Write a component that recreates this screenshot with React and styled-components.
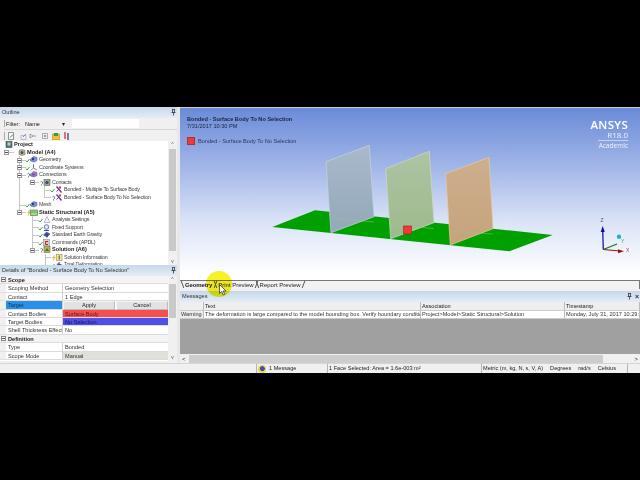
import React from 'react';
import styled, { createGlobalStyle } from 'styled-components';

const Global = createGlobalStyle`
  html, body { margin: 0; padding: 0; background: #000; }
  body { font-family: "Liberation Sans", Arial, sans-serif; }
  * { box-sizing: border-box; }
`;

const Screen = styled.div`
  width: 640px;
  height: 480px;
  background: #000;
  padding-top: 107px;
  position: relative;
  overflow: hidden;
  filter: blur(0.35px);
`;

const Win = styled.div`
  height: 266px;
  background: #f0f0f0;
  display: flex;
  flex-direction: column;
  font-size: 5.6px;
  color: #222;
`;

const Main = styled.div`
  height: 256px;
  display: flex;
`;

const Left = styled.div`
  width: 180px;
  flex: none;
  display: flex;
  flex-direction: column;
  border-right: 3px solid #e8e8e8;
`;

const Right = styled.div`
  flex: 1;
  min-width: 0;
  display: flex;
  flex-direction: column;
`;

const PanelHead = styled.div`
  height: 11px;
  flex: none;
  background: linear-gradient(#c6d8ea, #e3edf6);
  display: flex;
  align-items: center;
  justify-content: space-between;
  padding: 0 1px 1px 2px;
  color: #333;
`;

const Pins = styled.span`
  display: flex;
  align-items: center;
  gap: 3px;
  font-size: 7px;
  line-height: 7px;
  font-weight: 700;
`;

const FilterRow = styled.div`
  height: 12px;
  flex: none;
  display: flex;
  align-items: center;
  margin-left: 4px;
  padding-left: 2px;
  border-bottom: 1px solid #d8d8d8;
  position: relative;
  &::before {
    content: '';
    position: absolute;
    left: 0;
    top: 2px;
    bottom: 2px;
    width: 1px;
    background: #aaa;
  }
`;

const FilterName = styled.div`
  width: 47px;
  margin-left: 5px;
  display: flex;
  justify-content: space-between;
  padding-right: 7px;
`;

const FilterInput = styled.div`
  width: 67px;
  height: 9px;
  background: #fff;
`;

const Tools = styled.div`
  height: 11px;
  flex: none;
  display: flex;
  align-items: center;
  padding-left: 4px;
`;

const ToolSep = styled.i`
  width: 1px;
  height: 8px;
  background: #aaa;
  margin-right: 2px;
`;

const TreeWrap = styled.div`
  height: 124px;
  flex: none;
  display: flex;
  background: #fff;
  overflow: hidden;
`;

const Tree = styled.div`
  flex: 1;
  min-width: 0;
`;

const TreeRow = styled.div`
  height: 7.5px;
  position: relative;
  padding-left: ${p => p.$x}px;
  line-height: 7.5px;
  white-space: nowrap;
  font-weight: ${p => (p.$bold ? 700 : 400)};
  letter-spacing: ${p => (p.$bold ? 0 : -0.22)}px;
  font-size: ${p => (p.$bold ? 5.6 : 5.4)}px;
  color: ${p => (p.$bold ? '#222' : '#444')};
  display: flex;
  align-items: center;
`;

const VLine = styled.i`
  position: absolute;
  left: ${p => p.$x}px;
  top: 0;
  bottom: ${p => (p.$half ? 3.5 : 0)}px;
  width: 1px;
  background: #c6c6c6;
`;

const HLine = styled.i`
  position: absolute;
  left: ${p => p.$x}px;
  top: 3.5px;
  width: ${p => p.$w}px;
  height: 1px;
  background: #c6c6c6;
`;

const Expander = styled.i`
  position: absolute;
  left: ${p => p.$x - 2}px;
  top: 1.5px;
  width: 5px;
  height: 5px;
  border: 1px solid #999;
  background: linear-gradient(#555, #555) center / 3px 1px no-repeat #fff;
`;

const Scroll = styled.div`
  width: 9px;
  flex: none;
  background: #f0f0f0;
  display: flex;
  flex-direction: column;
  align-items: center;
  color: #555;
  font-size: 5px;
  line-height: 7px;
`;

const Thumb = styled.div`
  width: 7px;
  height: ${p => p.$h}px;
  margin-top: 1px;
  background: #c9c9c9;
`;

const Grow = styled.div`
  flex: 1;
`;

const DetailsWrap = styled.div`
  height: 85px;
  flex: none;
  display: flex;
  background: #fff;
`;

const DetailTable = styled.div`
  flex: 1;
  display: grid;
  grid-template-columns: 6px 57px 1fr;
  grid-auto-rows: 8.4px;
`;

const Gutter = styled.div`
  background: #f0f0f0;
  border-bottom: 1px solid #e0e0e0;
  display: flex;
  align-items: center;
  justify-content: center;
`;

const Minus = styled.i`
  width: 5px;
  height: 5px;
  border: 1px solid #888;
  background: linear-gradient(#555, #555) center / 3px 1px no-repeat #fff;
`;

const Section = styled.div`
  grid-column: 2 / 4;
  font-weight: 700;
  line-height: 8px;
  padding-left: 2px;
  background: #f4f4f4;
  border-bottom: 1px solid #dcdcdc;
`;

const Label = styled.div`
  line-height: 8px;
  padding-left: 2px;
  border-right: 1px solid #cfcfcf;
  border-bottom: 1px solid #dcdcdc;
  white-space: nowrap;
  overflow: hidden;
  color: ${p => (p.$active ? '#16324f' : '#333')};
  background: ${p => (p.$active ? '#2a8fe8' : '#fff')};
`;

const Value = styled.div`
  line-height: 8px;
  padding-left: 2px;
  border-bottom: 1px solid #dcdcdc;
  background: ${p => p.$bg || '#fff'};
  color: ${p => p.$color || '#333'};
`;

const ApplyCell = styled.div`
  display: grid;
  grid-template-columns: 1fr 1fr;
  gap: 1px;
  background: #fff;
  border-bottom: 1px solid #dcdcdc;
`;

const ApplyBtn = styled.div`
  background: #e2e2e2;
  border: 1px solid #bbb;
  border-top-color: #f4f4f4;
  border-left-color: #f4f4f4;
  text-align: center;
  line-height: 6.4px;
`;

const Viewport = styled.div`
  height: 173px;
  flex: none;
  position: relative;
  background: linear-gradient(#6a8bd8 0%, #a3b7e8 35%, #d9e2f6 65%, #ffffff 97%);
  border-top: 1px solid #ccc;
  padding: 7px 0 0 7px;
  color: #1c2440;
  overflow: hidden;
`;

const Model = styled.svg`
  position: absolute;
  left: 0;
  top: 0;
`;

const ViewTitle = styled.div`
  font-weight: 700;
  line-height: 8px;
  position: relative;
`;

const ViewDate = styled.div`
  line-height: 7px;
  position: relative;
`;

const Legend = styled.div`
  display: flex;
  align-items: center;
  gap: 3px;
  margin-top: 7px;
  position: relative;
  color: #2c3560;
`;

const Swatch = styled.i`
  width: 8px;
  height: 8px;
  background: #f03a3a;
  border: 1px solid #a33;
`;

const Logo = styled.div`
  position: absolute;
  right: 12px;
  top: 10px;
  width: 40px;
  text-align: right;
  color: #fff;
  font-family: "Open Sans", sans-serif;
`;

const LogoName = styled.div`
  font-size: 11.5px;
  line-height: 13px;
  font-weight: 600;
  letter-spacing: 0.3px;
`;

const LogoVersion = styled.div`
  font-size: 8px;
  line-height: 8px;
  margin-left: 10px;
  padding-bottom: 1px;
  border-bottom: 1px solid #c6d2f0;
  color: #eef2fc;
`;

const LogoKind = styled.div`
  font-size: 6.5px;
  line-height: 9px;
  color: #eef2fc;
`;

const TabBar = styled.div`
  height: 9px;
  flex: none;
  display: flex;
  background: #f2f2f2;
  border-top: 1px solid #777;
  border-right: 1px solid #777;
  padding-left: 4px;
  gap: 4px;
  margin-bottom: 2px;
`;

const Tab = styled.div`
  font-size: 6px;
  line-height: 8px;
  padding: 0 1px;
  color: #222;
  font-weight: ${p => (p.$on ? 700 : 400)};
  letter-spacing: ${p => (p.$on ? -0.1 : 0)}px;
  position: relative;
  &::before, &::after {
    content: '';
    position: absolute;
    top: 0;
    bottom: 1px;
    width: 0.6px;
    background: #555;
  }
  &::before {
    left: -2px;
    transform: skewX(20deg);
  }
  &::after {
    right: -2px;
    transform: skewX(-20deg);
  }
`;

const TableHead = styled.div`
  height: 9px;
  flex: none;
  display: grid;
  grid-template-columns: 24px 217px 144px 1fr;
  background: #eeeeee;
`;

const TableRow = styled(TableHead)`
  background: #fff;
  height: 8px;
  color: #333;
`;

const HeadCell = styled.div`
  padding-left: 1px;
  line-height: 9px;
  border-right: 1px solid #bbb;
  border-bottom: 1px solid #ccc;
  white-space: nowrap;
  overflow: hidden;
`;

const Cell = styled(HeadCell)`
  line-height: 7px;
  background: ${p => (p.$gray ? '#ececec' : '#fff')};
`;

const GrayArea = styled.div`
  flex: 1;
  background: #a0a0a0;
`;

const HScroll = styled.div`
  height: 9px;
  flex: none;
  background: #f0f0f0;
  display: flex;
  align-items: center;
  justify-content: space-between;
  padding: 0 2px;
  font-size: 6px;
`;

const HThumb = styled.div`
  flex: 1;
  height: 8px;
  margin: 0 31px 0 3px;
  background: #cdcdcd;
`;

const Status = styled.div`
  height: 10px;
  flex: none;
  display: grid;
  grid-template-columns: 256px 71px 154px 146px 1fr;
  background: #f0f0f0;
  line-height: 9px;
`;

const StatusCell = styled.div`
  border-left: 1px solid ${p => (p.$line ? '#b5b5b5' : 'transparent')};
  border-top: 1px solid #d5d5d5;
  padding-left: 1px;
  display: flex;
  gap: 7px;
  align-items: center;
  white-space: nowrap;
  overflow: hidden;
`;

const MsgIcon = styled.i`
  width: 8px;
  height: 8px;
  margin-right: -4px;
  border-radius: 50%;
  background: radial-gradient(circle at 55% 45%, #3350c8 0 35%, #f0d040 40%);
`;

const Spot = styled.div`
  position: absolute;
  left: 206px;
  top: 271px;
  width: 26px;
  height: 26px;
  border-radius: 50%;
  background: #f8f224;
  mix-blend-mode: multiply;
`;

const Cursor = styled.svg`
  position: absolute;
  left: 219px;
  top: 284px;
`;

const ToolBtn = styled.svg`
  flex: none;
  margin-right: ${p => p.$gap}px;
`;

const toolIcons = [
  { gap: 5, body: <><path d="M1.5.5h5v7h-5z" fill="#fff" stroke="#667" strokeWidth=".7" /><path d="M3 5.5l3-3" stroke="#2a8a2a" /></> },
  { gap: 1, body: <><path d="M1 3.5h5v4H1z" fill="#eef" stroke="#99a" strokeWidth=".6" /><path d="M3 5l3-3" stroke="#5a7ad0" strokeWidth=".8" /></> },
  { gap: 4, body: <><path d="M1 2l3 2-3 2zM4 4h3" fill="#fff" stroke="#778" strokeWidth=".7" /></> },
  { gap: 3, body: <><path d="M1.5 1.5h5v5h-5z" fill="#fff" stroke="#889" strokeWidth=".7" /><path d="M2.5 4h3M4 2.5v3" stroke="#445" strokeWidth=".6" /></> },
  { gap: 3, body: <><path d="M0 2h8v6H0z" fill="#e8c040" stroke="#8a7a20" strokeWidth=".5" /><path d="M2 1h4v3H2z" fill="#3a9a3a" /></> },
  { gap: 0, body: <><path d="M2 0v7" stroke="#d02020" strokeWidth="1.2" /><path d="M5 1v7" stroke="#2a2a90" strokeWidth="1.2" /></> },
];

const glyphs = {
  project: <><rect x="6" y=".5" width="6" height="6" fill="#3c7a9a" stroke="#234" strokeWidth=".5" /><rect x="7.5" y="1.5" width="3" height="3" fill="#e5cd60" /></>,
  model: <><path d="M6 1.5L9 .5l3 1v4l-3 1-3-1z" fill="#c9c060" stroke="#456" strokeWidth=".5" /><circle cx="9" cy="3.5" r="1.5" fill="#3a4ab0" /></>,
  geom: <><path d="M5.5 3l3-2.500 3.500 1v3l-3 1.500-3.500-1z" fill="#7f95d6" stroke="#3a4a90" strokeWidth=".5" /><circle cx="8" cy="3" r="1.2" fill="#2a3a8a" /></>,
  coord: <><path d="M8.5 4V.5" stroke="#2a2ac0" strokeWidth=".7" /><path d="M8.5 4L12 6" stroke="#c02020" strokeWidth=".7" /><path d="M8.5 4L5.5 6.5" stroke="#2a9a2a" strokeWidth=".7" /></>,
  conn: <><path d="M5.5 3l3-2.500 3.500 1v3l-3 1.500-3.500-1z" fill="#8a8fd0" stroke="#3a3a80" strokeWidth=".5" /><path d="M7 2.5h3v2H7z" fill="#a23ab0" /></>,
  contacts: <><rect x="6" y=".5" width="6" height="6" fill="#a5b466" stroke="#445" strokeWidth=".5" /><circle cx="9" cy="3.5" r="1.7" fill="#3a4aa8" /></>,
  bond: <><path d="M6.5.5l5 6" stroke="#6a2ab0" strokeWidth="1.3" /><path d="M6.5 5.5l2-2" stroke="#222" strokeWidth=".8" /><rect x="9" y=".5" width="2" height="2" fill="#d03030" /></>,
  static: <><rect x="5.5" y="1" width="7" height="5.5" fill="#a9d48c" stroke="#2a7a2a" strokeWidth=".6" /><path d="M6 3h6" stroke="#2a7a2a" strokeWidth=".5" /></>,
  analysis: <><path d="M6 6.5L9 .5l3 6z" fill="#eef" stroke="#889" strokeWidth=".5" /></>,
  fixed: <><circle cx="8.5" cy="3" r="2.3" fill="#dfe4f5" stroke="#3a4aa0" strokeWidth=".7" /><path d="M6 6.5h5" stroke="#3a4aa0" /></>,
  gravity: <><path d="M5.5 4l3-3 3.500 2-3 3z" fill="#3f58b0" stroke="#223" strokeWidth=".4" /><path d="M9 3v3.5" stroke="#223" strokeWidth=".7" /></>,
  commands: <><rect x="5.5" y=".5" width="6" height="6.5" fill="#cfcfcf" stroke="#667" strokeWidth=".4" /><path d="M10 2.5H7.5v3H10" fill="none" stroke="#e01010" strokeWidth="1" /></>,
  solution: <><rect x="6" y=".5" width="6" height="6" fill="#c3b54a" stroke="#445" strokeWidth=".5" /><path d="M7 5l2-3 2 3z" fill="#2a7a3a" /></>,
  info: <><rect x="6.5" y=".5" width="5.5" height="6" fill="#f5ec70" stroke="#776" strokeWidth=".5" /><path d="M9.2 1.5v4" stroke="#2a2ac0" strokeWidth=".9" /></>,
  deform: <><path d="M5.5 5l3-3 4 2-3 2.500z" fill="#3050c0" /><path d="M7 3l2-2 1.500 1" fill="#e03a20" /></>,
};

const TreeIcon = ({ kind, st }) => (
  <svg width="13" height="7" viewBox="0 0 13 7" style={{ marginRight: 1, flex: 'none' }}>
    {st === 'ok' && <path d="M.8 4.5l1.300 1.500L4.500 3" fill="none" stroke="#1c9a1c" strokeWidth=".9" />}
    {st === 'q' && <path d="M2.500 3q1.300-1.300 2 0T3.500 5.500v1" fill="none" stroke="#444" strokeWidth=".7" />}
    {st === 'bolt' && <path d="M4.500 1L2.500 4H4L3 6.800 5.500 3H4z" fill="#e8c520" stroke="#a09020" strokeWidth=".2" />}
    {glyphs[kind]}
  </svg>
);

const treeData = [
  { x: 0, text: 'Project', bold: true, kind: 'project' },
  { x: 13, text: 'Model (A4)', bold: true, kind: 'model', exp: 6, h: [[6, 8]] },
  { x: 25, text: 'Geometry', kind: 'geom', st: 'ok', exp: 19, lines: [[19]], h: [[19, 7]] },
  { x: 25, text: 'Coordinate Systems', kind: 'coord', st: 'ok', exp: 19, lines: [[19]], h: [[19, 7]] },
  { x: 25, text: 'Connections', kind: 'conn', st: 'q', exp: 19, lines: [[19]], h: [[19, 7]] },
  { x: 38, text: 'Contacts', kind: 'contacts', st: 'q', exp: 32, lines: [[19]], h: [[32, 7]] },
  { x: 50, text: 'Bonded - Multiple To Surface Body', kind: 'bond', st: 'ok', lines: [[19], [44]], h: [[44, 7]] },
  { x: 50, text: 'Bonded - Surface Body To No Selection', kind: 'bond', st: 'q', lines: [[19], [44, 1]], h: [[44, 7]] },
  { x: 25, text: 'Mesh', kind: 'geom', st: 'ok', lines: [[19]], h: [[19, 7]] },
  { x: 25, text: 'Static Structural (A5)', bold: true, kind: 'static', st: 'bolt', exp: 19, lines: [[19, 1]], h: [[19, 7]] },
  { x: 38, text: 'Analysis Settings', kind: 'analysis', st: 'ok', lines: [[32]], h: [[32, 7]] },
  { x: 38, text: 'Fixed Support', kind: 'fixed', st: 'ok', lines: [[32]], h: [[32, 7]] },
  { x: 38, text: 'Standard Earth Gravity', kind: 'gravity', st: 'ok', lines: [[32]], h: [[32, 7]] },
  { x: 38, text: 'Commands (APDL)', kind: 'commands', st: 'ok', lines: [[32]], h: [[32, 7]] },
  { x: 38, text: 'Solution (A6)', bold: true, kind: 'solution', st: 'q', exp: 32, lines: [[32, 1]], h: [[32, 7]] },
  { x: 50, text: 'Solution Information', kind: 'info', st: 'bolt', lines: [[45]], h: [[45, 6]] },
  { x: 50, text: 'Total Deformation', kind: 'deform', st: 'ok', lines: [[45]], h: [[45, 6]] },
];

const details = [
  { section: 'Scope' },
  { label: 'Scoping Method', value: 'Geometry Selection' },
  { label: 'Contact', value: '1 Edge' },
  { label: 'Target', active: true, apply: true },
  { label: 'Contact Bodies', value: 'Surface Body', bg: '#f55050', color: '#6a1010' },
  { label: 'Target Bodies', value: 'No Selection', bg: '#5050e8', color: '#14145c' },
  { label: 'Shell Thickness Effect', value: 'No' },
  { section: 'Definition' },
  { label: 'Type', value: 'Bonded' },
  { label: 'Scope Mode', value: 'Manual', bg: '#dfe0da' },
];

const toPts = pts => pts.map(([x, y]) => `${x - 180},${y - 107}`).join(' ');

const PinIcon = () => (
  <svg width="5" height="7" viewBox="0 0 5 7">
    <path d="M1 .5h3M1.5.5v3M3.5.5v3M.5 3.5h4M2.5 3.5v3" stroke="#333" strokeWidth=".8" fill="none" />
  </svg>
);

const Shade = ({ id, top, bottom }) => (
  <linearGradient id={id} x1="0" y1="0" x2="0" y2="1">
    <stop offset="0" stopColor={top} />
    <stop offset="1" stopColor={bottom} />
  </linearGradient>
);

const SceneModel = () => (
  <Model width="460" height="173" viewBox="0 0 460 173">
    <defs>
      <Shade id="p1" top="#a9b9cb" bottom="#93a8b8" />
      <Shade id="p2" top="#aec3a4" bottom="#9dba8c" />
      <Shade id="p3" top="#cdae8e" bottom="#c5a47c" />
    </defs>
    <polygon points={toPts([[272.3, 226], [315, 209.3], [493, 227.7], [552.7, 234], [509.3, 250.3]])} fill="#00a000" />
    <polygon points={toPts([[326, 160.7], [369.3, 144.3], [374, 215.7], [331, 231.7]])} fill="url(#p1)" stroke="#c5d2e0" strokeWidth="0.7" />
    <polygon points={toPts([[385.7, 167.7], [429.3, 150.3], [434, 221.7], [390.7, 237.7]])} fill="url(#p2)" stroke="#ccdcc0" strokeWidth="0.7" />
    <polygon points={toPts([[445.7, 172.7], [489, 156.3], [493, 227.7], [450.3, 244]])} fill="url(#p3)" stroke="#ecc8a0" strokeWidth="0.7" />
    <path d="M153 110.500L194 114M213 117L254 120.500M273 123.500L313 126" stroke="#8fc98f" strokeWidth=".5" fill="none" />
    <rect x="223.5" y="118" width="8" height="8" fill="#f03a3a" stroke="#a02020" strokeWidth="0.6" />
    <path d="M423.3 141.5L422.7 121" stroke="#0a0aa0" strokeWidth="1.2" />
    <path d="M422.7 118l-2 6h4z" fill="#0a0aa0" />
    <path d="M423.3 141.5L440 143" stroke="#a01010" strokeWidth="1.2" />
    <path d="M444 143.3l-6-2v4z" fill="#a01010" />
    <path d="M423.3 141.5L437 136" stroke="#0a7a1a" strokeWidth="1.2" />
    <circle cx="439" cy="128.7" r="2.2" fill="#18b8c8" />
    <text x="420.5" y="114" fontSize="5" fill="#4a4aa0">Z</text>
    <text x="446" y="144" fontSize="5" fill="#c04040">X</text>
    <text x="441" y="135" fontSize="5" fill="#4aa060">Y</text>
  </Model>
);

export default function App() {
  return (
    <>
      <Global />
      <Screen>
        <Win>
          <Main>
            <Left>
              <PanelHead>Outline<Pins><PinIcon /></Pins></PanelHead>
              <FilterRow>
                Filter:
                <FilterName>Name<span>▾</span></FilterName>
                <FilterInput />
              </FilterRow>
              <Tools>
                <ToolSep />
                {toolIcons.map((t, i) => (
                  <ToolBtn key={i} $gap={t.gap} width="8" height="8" viewBox="0 0 8 8">{t.body}</ToolBtn>
                ))}
              </Tools>
              <TreeWrap>
                <Tree>
                  {treeData.map(r => (
                    <TreeRow key={r.text} $x={r.x} $bold={r.bold}>
                      {(r.lines || []).map(([x, half], i) => <VLine key={i} $x={x} $half={half} />)}
                      {(r.h || []).map(([x, w], i) => <HLine key={i} $x={x} $w={w} />)}
                      {r.exp !== undefined && <Expander $x={r.exp} />}
                      <TreeIcon kind={r.kind} st={r.st} />
                      {r.text}
                    </TreeRow>
                  ))}
                </Tree>
                <Scroll>
                  ^
                  <Thumb $h={102} />
                  <Grow />
                  v
                </Scroll>
              </TreeWrap>
              <PanelHead>Details of "Bonded - Surface Body To No Selection"<Pins><PinIcon /></Pins></PanelHead>
              <DetailsWrap>
                <DetailTable>
                  {details.map(d => d.section ? (
                    <React.Fragment key={d.section}>
                      <Gutter><Minus /></Gutter>
                      <Section>{d.section}</Section>
                    </React.Fragment>
                  ) : (
                    <React.Fragment key={d.label}>
                      <Gutter />
                      <Label $active={d.active}>{d.label}</Label>
                      {d.apply ? (
                        <ApplyCell><ApplyBtn>Apply</ApplyBtn><ApplyBtn>Cancel</ApplyBtn></ApplyCell>
                      ) : (
                        <Value $bg={d.bg} $color={d.color}>{d.value}</Value>
                      )}
                    </React.Fragment>
                  ))}
                </DetailTable>
                <Scroll>
                  ^
                  <Thumb $h={34} />
                  <Grow />
                  v
                </Scroll>
              </DetailsWrap>
            </Left>
            <Right>
              <Viewport>
                <SceneModel />
                <ViewTitle>Bonded - Surface Body To No Selection</ViewTitle>
                <ViewDate>7/31/2017 10:30 PM</ViewDate>
                <Legend><Swatch />Bonded - Surface Body To No Selection</Legend>
                <Logo>
                  <LogoName>ANSYS</LogoName>
                  <LogoVersion>R18.0</LogoVersion>
                  <LogoKind>Academic</LogoKind>
                </Logo>
              </Viewport>
              <TabBar>
                <Tab $on>Geometry</Tab>
                <Tab>Print Preview</Tab>
                <Tab>Report Preview</Tab>
              </TabBar>
              <PanelHead>Messages<Pins><PinIcon /><span>×</span></Pins></PanelHead>
              <TableHead>
                <HeadCell />
                <HeadCell>Text</HeadCell>
                <HeadCell>Association</HeadCell>
                <HeadCell>Timestamp</HeadCell>
              </TableHead>
              <TableRow>
                <Cell $gray>Warning</Cell>
                <Cell>The deformation is large compared to the model bounding box.  Verify boundary conditions</Cell>
                <Cell>Project&gt;Model&gt;Static Structural&gt;Solution</Cell>
                <Cell>Monday, July 31, 2017 10:29:43</Cell>
              </TableRow>
              <GrayArea />
              <HScroll>&lt;<HThumb />&gt;</HScroll>
            </Right>
          </Main>
          <Status>
            <StatusCell />
            <StatusCell $line><MsgIcon /> 1 Message</StatusCell>
            <StatusCell $line>1 Face Selected: Area = 1.6e-003 m²</StatusCell>
            <StatusCell $line>Metric (m, kg, N, s, V, A)<span>Degrees</span><span>rad/s</span><span>Celsius</span></StatusCell>
            <StatusCell $line />
          </Status>
        </Win>
        <Spot />
        <Cursor width="8" height="12" viewBox="0 0 8 12">
          <path d="M.5.5v9l2.2-2 1.500 3.500 1.500-.7-1.500-3.300H7z" fill="#fff" stroke="#222" strokeWidth="0.7" />
        </Cursor>
      </Screen>
    </>
  );
}
